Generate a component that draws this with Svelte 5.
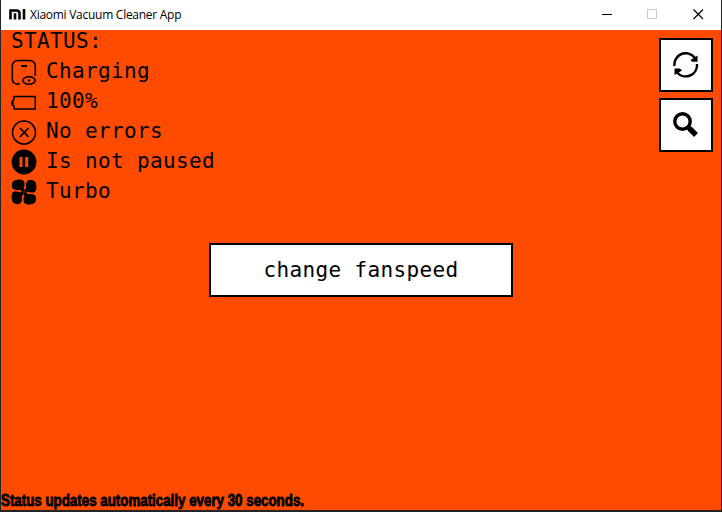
<script>
  const rows = [
    { icon: 'robot', text: 'Charging' },
    { icon: 'battery', text: '100%' },
    { icon: 'error', text: 'No errors' },
    { icon: 'pause', text: 'Is not paused' },
    { icon: 'fan', text: 'Turbo' }
  ];
</script>

<div class="window">
  <header>
    <svg class="logo" width="17" height="11" viewBox="0 0 17 11"><path d="M1.5 10.5V1.5H7.5Q10.5 1.5 10.5 4.5V10.5M6 4.2V10.5M15 0V10.5" fill="none" stroke="#000" stroke-width="2.6" /></svg>
    <span class="title">Xiaomi Vacuum Cleaner App</span>
    <svg class="controls" width="138" height="29" viewBox="0 0 138 29" shape-rendering="crispEdges">
      <path d="M19 14.5H29" stroke="#000" />
      <rect x="64.5" y="9.5" width="9" height="9" fill="none" stroke="#ccc" />
      <path d="M110.5 9.5L120 19M120 9.5L110.5 19" stroke="#000" stroke-width="1.2" shape-rendering="auto" />
    </svg>
  </header>

  <main>
    <section class="status">
      <div class="row">STATUS:</div>
      {#each rows as row}
        <div class="row">
          <svg width="26" height="26" viewBox="0 0 26 26" fill="none" stroke="#000" stroke-width="1.6">
            {#if row.icon === 'robot'}
              <path d="M9 25H7Q1.3 25 1.3 20V7.5Q1.3 1.5 7.5 1.5H18Q24.3 1.5 24.3 7.5V17" />
              <path d="M10 7H16" stroke-width="2" />
              <ellipse cx="18" cy="21.5" rx="6.2" ry="3.7" />
              <path d="M17 21.5H19" stroke-width="2" />
            {:else if row.icon === 'battery'}
              <path d="M3 7.5H24.3V20H3V17L1.5 16V12L3 10.5Z" />
              <path d="M1.5 12V16" stroke-width="2" />
            {:else if row.icon === 'error'}
              <circle cx="13" cy="13.5" r="11.5" />
              <path d="M9 9L17.5 18M17.5 9L9 18" stroke-width="1.8" />
            {:else if row.icon === 'pause'}
              <circle cx="13" cy="13" r="12.4" fill="#000" stroke="none" />
              <path d="M10 8V18M15.7 8V18" stroke="#ff4b00" stroke-width="3" />
            {:else}
              <g fill="#000" stroke="none">
                {#each [0, 90, 180, 270] as angle}
                  <path transform="rotate({angle} 13 13)" d="M11 14L10.5 12Q9 10.5 6 11Q1 11 .8 6.5Q1 1 6 .8Q12.5 -.2 13.4 3.5Q14 6 12.8 8.5Q12.5 10.5 14 12V14Z" />
                {/each}
              </g>
              <circle cx="13" cy="13" r=".7" fill="#ff4b00" stroke="none" />
            {/if}
          </svg>
          <span>{row.text}</span>
        </div>
      {/each}
    </section>

    <button class="fanspeed">change fanspeed</button>

    <nav>
      <button aria-label="Refresh">
        <svg width="26" height="26" viewBox="0 0 26 26">
          <g fill="none" stroke="#000" stroke-width="2.5"><path d="M1.5 14A11.3 11.3 0 0 1 21.8 5.8" /><path d="M24 12A11.3 11.3 0 0 1 4 20.2" /></g>
          <path d="M24.5 3.5V9.8H19L17.5 8ZM1.5 23V16.5H7L9 18.5Z" />
        </svg>
      </button>
      <button aria-label="Search">
        <svg width="26" height="26" viewBox="0 0 26 26" fill="none" stroke="#000">
          <circle cx="9.5" cy="9.5" r="7.7" stroke-width="3.4" />
          <path d="M14.8 14.8L18 18" stroke-width="4.5" />
          <path d="M16.5 16.5L23 23" stroke-width="5.5" />
        </svg>
      </button>
    </nav>

    <footer>
      <svg width="320" height="20"><text x="0" y="16" textLength="303" lengthAdjust="spacingAndGlyphs">Status updates automatically every 30 seconds.</text></svg>
    </footer>
  </main>
</div>

<style>
  :global(body) { margin: 0; overflow: hidden; }
  .window {
    box-sizing: border-box;
    width: 722px;
    height: 512px;
    display: flex;
    flex-direction: column;
    border: solid #242424;
    border-width: 0 1px 2px;
    background: #fff;
  }
  header {
    height: 30px;
    flex: none;
    display: flex;
    align-items: center;
    box-sizing: border-box;
    padding: 0 0 1px 8px;
    background: #fff;
  }
  .logo { margin-top: -1px; }
  .title {
    margin-left: 4px;
    font: 12px/28px "Open Sans", sans-serif;
    letter-spacing: -0.27px;
    color: #000;
    white-space: nowrap;
  }
  .controls { margin-left: auto; }
  main {
    flex: 1;
    display: grid;
    grid-template-columns: 208px 304px 1fr;
    grid-template-rows: 213px 54px 1fr;
    background: #ff4b00;
    color: #000;
    font: 21px/30px "DejaVu Sans Mono", monospace;
    letter-spacing: 0.36px;
  }
  .status {
    grid-area: 1 / 1;
    padding-left: 10px;
    margin-top: -4px;
    white-space: nowrap;
  }
  .row { display: flex; height: 30px; }
  .row svg { margin: 3px 9px 0 0; flex: none; }
  button {
    box-sizing: border-box;
    border: 2px solid #000;
    background: #fff;
    color: #000;
    font: inherit;
    letter-spacing: inherit;
    padding: 0;
  }
  .fanspeed { grid-area: 2 / 2; }
  nav {
    grid-area: 1 / 3;
    display: flex;
    flex-direction: column;
    align-items: flex-end;
    gap: 6px;
    padding: 8px 8px 0 0;
  }
  nav button {
    width: 54px;
    height: 54px;
    display: grid;
    place-items: center;
  }
  footer {
    grid-area: 3 / 1 / 4 / 4;
    align-self: end;
    height: 20px;
    display: flex;
  }
  footer svg { overflow: visible; }
  footer text {
    font: bold 16px "Liberation Sans Narrow", "Liberation Sans", sans-serif;
    letter-spacing: 0;
    fill: #000;
    stroke: #000;
    stroke-width: 0.8px;
  }
</style>
